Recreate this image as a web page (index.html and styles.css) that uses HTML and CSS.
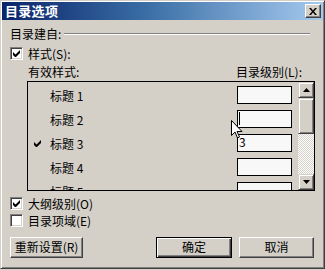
FILE: index.html
```html
<!DOCTYPE html>
<html lang="zh-CN">
<head>
<meta charset="utf-8">
<title>目录选项</title>
<link rel="stylesheet" href="styles.css">
</head>
<body>
<div class="dialog">
  <div class="titlebar">
    <span class="title">目录选项</span>
    <span class="close"><svg width="8" height="7" viewBox="0 0 8 7"><path d="M0 0h2l2 2.5L6 0h2L5 3.5 8 7H6L4 4.5 2 7H0l3-3.5z" fill="#000"/></svg></span>
  </div>
  <div class="content">
    <div class="group-head"><span>目录建自:</span><span class="etched"></span></div>
    <div class="check first"><span class="box"><svg width="7" height="7" viewBox="0 0 7 7"><path d="M0 2v3l2 2h1l4-4V0L2.5 4.5z" fill="#000"/></svg></span><span>样式(S):</span></div>
    <div class="list-head"><span>有效样式:</span><span>目录级别(L):</span></div>
    <div class="list">
      <div class="rows">
        <div class="row"><span class="mark"></span><span class="name">标题 1</span><span class="input"></span></div>
        <div class="row"><span class="mark"></span><span class="name">标题 2</span><span class="input"><span class="caret"></span></span></div>
        <div class="row"><span class="mark"><svg width="7" height="7" viewBox="0 0 7 7"><path d="M0 2v3l2 2h1l4-4V0L2.5 4.5z" fill="#000"/></svg></span><span class="name">标题 3</span><span class="input">3</span></div>
        <div class="row"><span class="mark"></span><span class="name">标题 4</span><span class="input"></span></div>
        <div class="row"><span class="mark"></span><span class="name">标题 5</span><span class="input"></span></div>
      </div>
      <div class="scrollbar">
        <span class="sbtn"><svg width="7" height="4" viewBox="0 0 7 4"><path d="M3.5 0L7 4H0z" fill="#000"/></svg></span>
        <span class="thumb"></span>
        <span class="track"></span>
        <span class="sbtn"><svg width="7" height="4" viewBox="0 0 7 4"><path d="M0 0h7L3.5 4z" fill="#000"/></svg></span>
      </div>
    </div>
    <div class="check outline"><span class="box"><svg width="7" height="7" viewBox="0 0 7 7"><path d="M0 2v3l2 2h1l4-4V0L2.5 4.5z" fill="#000"/></svg></span><span>大纲级别(O)</span></div>
    <div class="check field"><span class="box"></span><span>目录项域(E)</span></div>
    <div class="buttons">
      <span class="btn reset">重新设置(R)</span>
      <span class="btn ok">确定</span>
      <span class="btn cancel">取消</span>
    </div>
  </div>
  <svg class="cursor" width="12" height="19" viewBox="0 0 12 19"><path d="M0.5 0.5v15l3.5-3.5 2.5 6 2-1-2.5-5.5h5z" fill="#fff" stroke="#000" stroke-width="1"/></svg>
</div>
</body>
</html>
```
FILE: styles.css
```css
* { box-sizing: border-box; }
html, body { margin: 0; padding: 0; }
body {
  width: 325px;
  height: 270px;
  overflow: hidden;
  background: #d4d0c8;
  font-family: "Noto Sans CJK SC", "Liberation Sans", sans-serif;
  font-size: 12px;
  color: #000;
}
.dialog {
  position: relative;
  width: 325px;
  height: 269px;
  background: #d4d0c8;
  border: 1px solid;
  border-color: #d4d0c8 #404040 #404040 #d4d0c8;
  box-shadow: inset 1px 1px #fff, inset -1px -1px #808080;
  padding: 1px 1px;
}
.titlebar {
  height: 18px;
  background: linear-gradient(to right, #0a246a, #3a6ea5 45%, #a6caf0);
  display: flex;
  align-items: center;
  justify-content: space-between;
  padding: 0 2px 0 3px;
}
.title {
  color: #fff;
  font-weight: bold;
  font-size: 13px;
  line-height: 16px;
  letter-spacing: 0.3px;
}
.close {
  width: 16px;
  height: 14px;
  background: #d4d0c8;
  border: 1px solid;
  border-color: #fff #404040 #404040 #fff;
  box-shadow: inset -1px -1px #808080;
  display: flex;
  align-items: center;
  justify-content: center;
}
.content {
  padding: 0 8px 0 8px;
}
.group-head {
  margin-top: 7px;
  height: 14px;
  line-height: 14px;
  display: flex;
  align-items: center;
}
.etched {
  flex: 1;
  margin: 0 5px 0 3px;
  border-top: 1px solid #808080;
  border-bottom: 1px solid #fff;
}
.check {
  height: 13px;
  line-height: 13px;
  display: flex;
  align-items: center;
  gap: 5px;
}
.check.first { margin-top: 6px; }
.check.outline { margin-top: 6px; }
.check.field { margin-top: 4px; }
.box {
  width: 13px;
  height: 13px;
  background: #fff;
  border: 1px solid;
  border-color: #808080 #fff #fff #808080;
  box-shadow: inset 1px 1px #404040, inset -1px -1px #d4d0c8;
  display: flex;
  align-items: center;
  justify-content: center;
}
.list-head {
  margin-top: 5px;
  height: 14px;
  line-height: 14px;
  display: grid;
  grid-template-columns: 1fr 79px;
  padding-left: 18px;
}
.list {
  margin-top: 2px;
  margin-left: 17px;
  height: 110px;
  border: 1px solid #000;
  display: flex;
}
.rows {
  flex: 1;
  overflow: hidden;
  padding-top: 1px;
}
.row {
  height: 24px;
  display: grid;
  grid-template-columns: 16px 1fr 55px;
  align-items: center;
  padding: 0 6px;
}
.mark {
  display: flex;
  align-items: center;
}
.name { line-height: 14px; padding-top: 1px; }
.input {
  height: 18px;
  background: #f8f8f8;
  border: 1px solid #000;
  line-height: 14px;
  padding-left: 1px;
  position: relative;
}
.caret {
  position: absolute;
  left: 1px;
  top: 1px;
  width: 1px;
  height: 13px;
  background: #000;
}
.scrollbar {
  width: 16px;
  display: flex;
  flex-direction: column;
}
.sbtn, .thumb {
  background: #d4d0c8;
  border: 1px solid;
  border-color: #d4d0c8 #404040 #404040 #d4d0c8;
  box-shadow: inset 1px 1px #fff, inset -1px -1px #808080;
}
.sbtn {
  height: 16px;
  display: flex;
  align-items: center;
  justify-content: center;
}
.thumb { height: 36px; }
.track {
  flex: 1;
  background: repeating-conic-gradient(#ffffff 0 25%, #d4d0c8 0 50%) 0 0 / 2px 2px;
}
.buttons {
  margin-top: 10px;
  display: flex;
  gap: 7px;
  padding-right: 1px;
}
.btn {
  height: 21px;
  line-height: 18px;
  text-align: center;
  background: #d4d0c8;
  border: 1px solid;
  border-color: #fff #404040 #404040 #fff;
  box-shadow: inset -1px -1px #808080;
}
.reset { width: 73px; }
.ok {
  width: 76px;
  margin-left: auto;
  border-color: #000;
  box-shadow: inset 1px 1px #fff, inset -1px -1px #404040, inset -2px -2px #808080;
}
.cancel { width: 75px; }
.cursor {
  position: absolute;
  left: 230px;
  top: 119px;
}
```
